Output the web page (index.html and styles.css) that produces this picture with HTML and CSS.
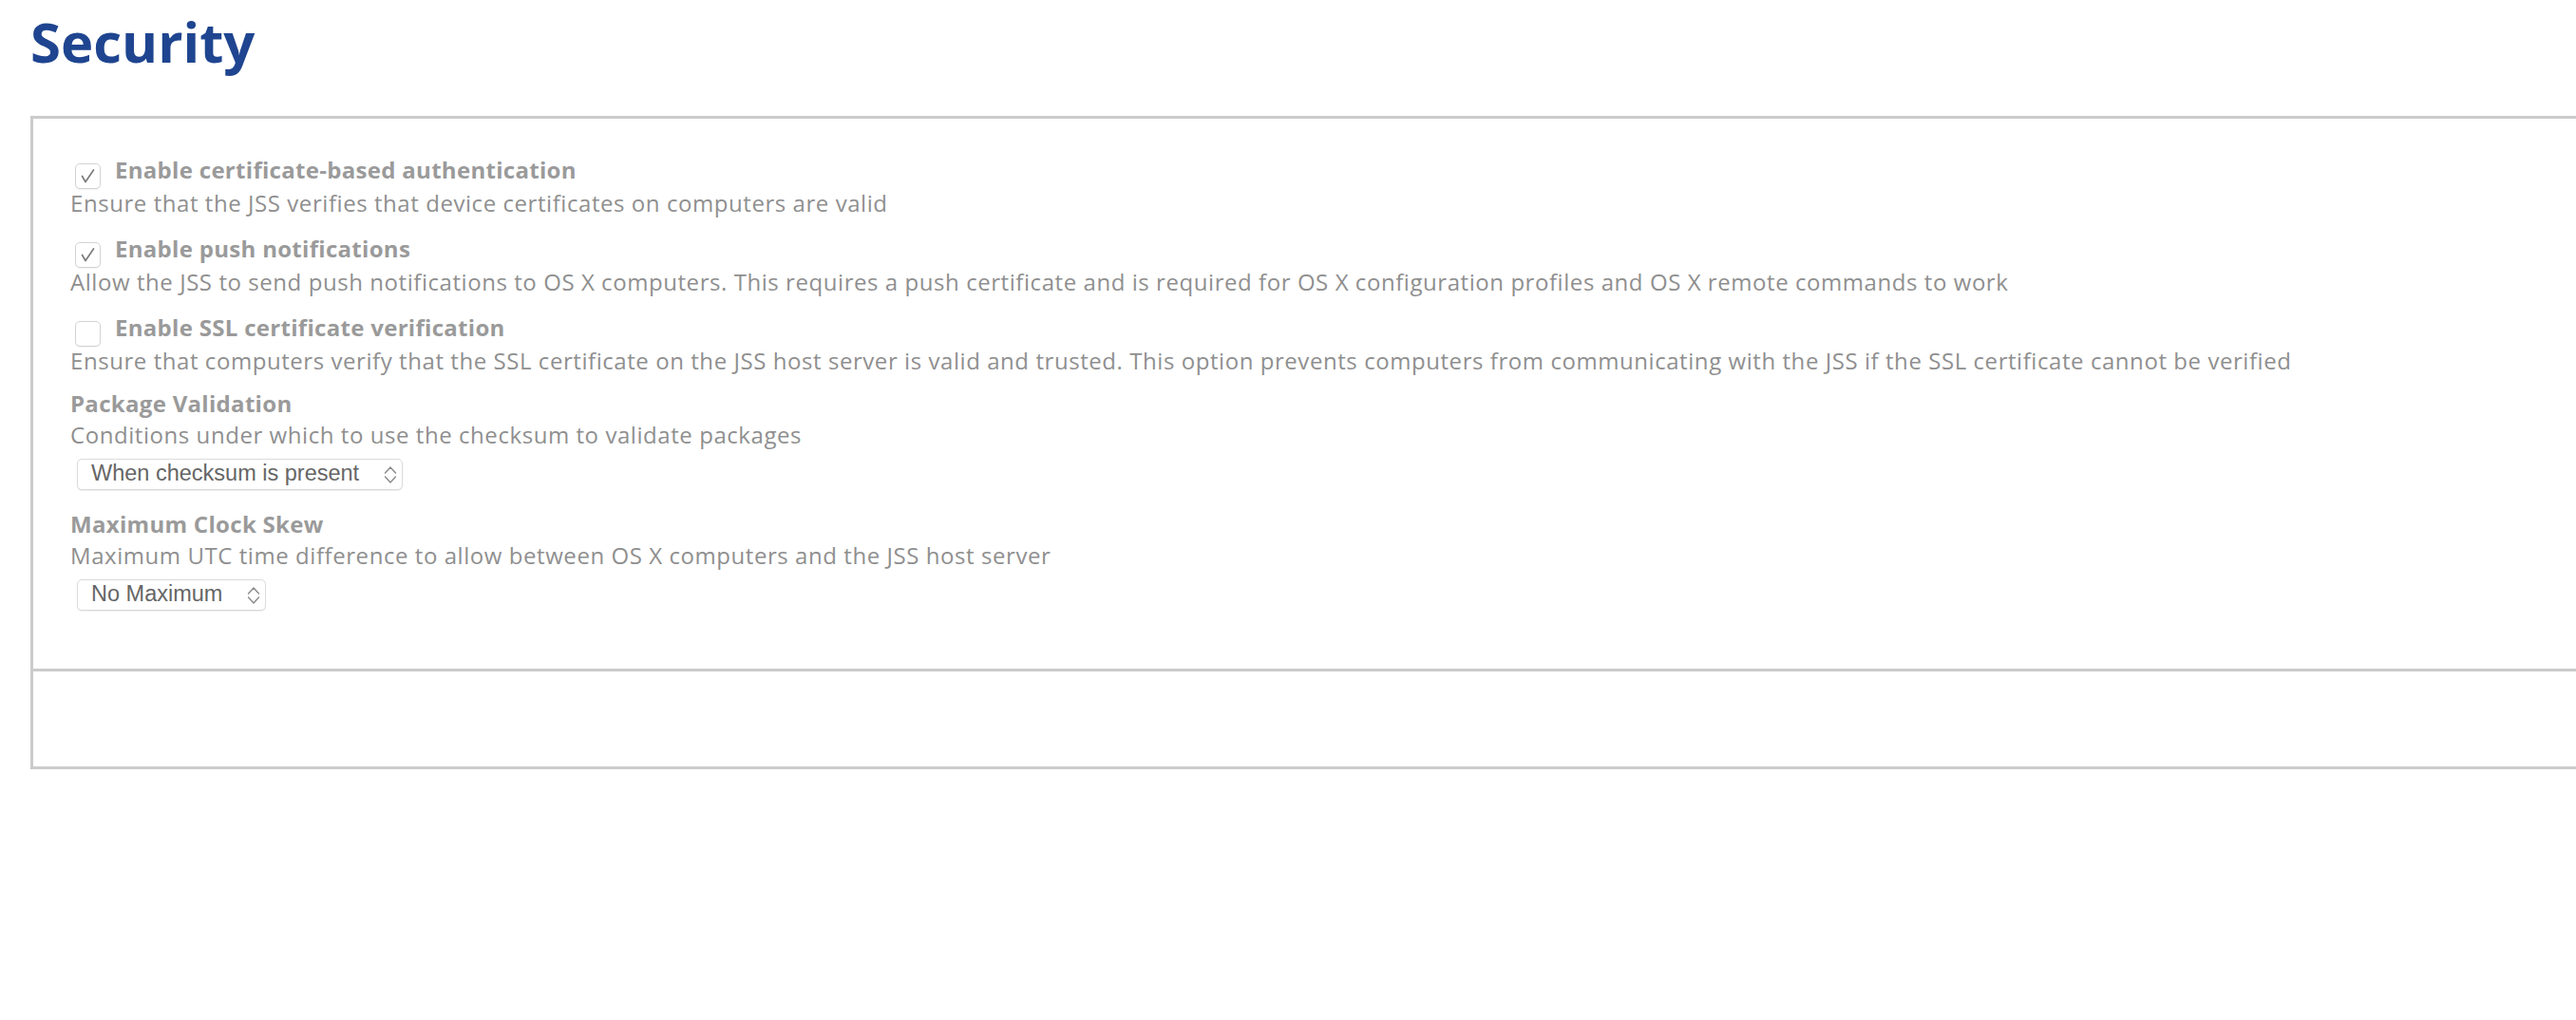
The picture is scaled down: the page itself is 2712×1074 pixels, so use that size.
FILE: index.html
```html
<!DOCTYPE html>
<html lang="en">
<head>
<meta charset="utf-8">
<title>Security</title>
<link rel="stylesheet" href="styles.css">
</head>
<body>
<div class="page">
  <h1 class="title">Security</h1>
  <div class="panel">
    <div class="panel-body">
      <div class="row">
        <div class="row-label">
          <span class="checkbox is-checked"><svg viewBox="0 0 27 27" width="27" height="27"><polyline points="7.5,13.5 11,19.5 19.5,7" fill="none" stroke="#7c7c7c" stroke-width="1.7" stroke-linecap="round" stroke-linejoin="round"/></svg></span>
          <span class="label">Enable certificate-based authentication</span>
        </div>
        <div class="desc">Ensure that the JSS verifies that device certificates on computers are valid</div>
      </div>
      <div class="row">
        <div class="row-label">
          <span class="checkbox is-checked"><svg viewBox="0 0 27 27" width="27" height="27"><polyline points="7.5,13.5 11,19.5 19.5,7" fill="none" stroke="#7c7c7c" stroke-width="1.7" stroke-linecap="round" stroke-linejoin="round"/></svg></span>
          <span class="label">Enable push notifications</span>
        </div>
        <div class="desc">Allow the JSS to send push notifications to OS X computers. This requires a push certificate and is required for OS X configuration profiles and OS X remote commands to work</div>
      </div>
      <div class="row">
        <div class="row-label">
          <span class="checkbox"></span>
          <span class="label">Enable SSL certificate verification</span>
        </div>
        <div class="desc">Ensure that computers verify that the SSL certificate on the JSS host server is valid and trusted. This option prevents computers from communicating with the JSS if the SSL certificate cannot be verified</div>
      </div>
      <div class="row field">
        <div class="field-label">Package Validation</div>
        <div class="desc">Conditions under which to use the checksum to validate packages</div>
        <div class="select">
          <span class="select-text">When checksum is present</span>
          <svg class="select-arrows" viewBox="0 0 14 20" width="14" height="20"><polyline points="1.5,8 7,2 12.5,8" fill="none" stroke="#8a8a8a" stroke-width="1.4" stroke-linecap="round" stroke-linejoin="round"/><polyline points="1.5,12 7,18 12.5,12" fill="none" stroke="#8a8a8a" stroke-width="1.4" stroke-linecap="round" stroke-linejoin="round"/></svg>
        </div>
      </div>
      <div class="row field">
        <div class="field-label">Maximum Clock Skew</div>
        <div class="desc">Maximum UTC time difference to allow between OS X computers and the JSS host server</div>
        <div class="select">
          <span class="select-text">No Maximum</span>
          <svg class="select-arrows" viewBox="0 0 14 20" width="14" height="20"><polyline points="1.5,8 7,2 12.5,8" fill="none" stroke="#8a8a8a" stroke-width="1.4" stroke-linecap="round" stroke-linejoin="round"/><polyline points="1.5,12 7,18 12.5,12" fill="none" stroke="#8a8a8a" stroke-width="1.4" stroke-linecap="round" stroke-linejoin="round"/></svg>
        </div>
      </div>
    </div>
    <div class="panel-footer"></div>
  </div>
</div>
</body>
</html>
```

FILE: styles.css
```css
html, body {
  margin: 0;
  padding: 0;
  background: #ffffff;
  overflow: hidden;
}

body {
  font-family: "Open Sans", "Noto Sans", sans-serif;
}

.page {
  padding: 0 0 0 32px;
}

.title {
  margin: 8px 0 42px 0;
  font-size: 58px;
  line-height: 72px;
  font-weight: 700;
  color: #1f4590;
  letter-spacing: 0;
}

.panel {
  border: 3px solid #cbcbcb;
  margin-right: -60px;
}

.panel-body {
  padding: 35px 0 53px 39px;
  display: flex;
  flex-direction: column;
  gap: 12px;
}

.panel-footer {
  border-top: 3px solid #cbcbcb;
  height: 100px;
}

.row {
  display: flex;
  flex-direction: column;
  align-items: flex-start;
}

.row-label {
  display: flex;
  align-items: flex-start;
  height: 37px;
}

.checkbox {
  box-sizing: border-box;
  width: 27px;
  height: 27px;
  margin: 12px 15px 0 5px;
  border: 1px solid #d3d3d3;
  border-radius: 5px;
  background: #fff;
  box-shadow: 0 1px 1px rgba(0, 0, 0, 0.05);
  display: flex;
  align-items: center;
  justify-content: center;
  flex: none;
}

.checkbox svg {
  display: block;
  margin: -1px;
}

.label,
.field-label {
  font-size: 24px;
  font-weight: 700;
  color: #9a9a9a;
  letter-spacing: 0.3px;
  line-height: 37px;
  white-space: nowrap;
}

.field-label {
  line-height: 32px;
}

.desc {
  font-size: 24px;
  font-weight: 400;
  color: #8f8f8f;
  letter-spacing: 0.56px;
  line-height: 34px;
  white-space: nowrap;
}

.select {
  box-sizing: border-box;
  display: inline-flex;
  align-items: center;
  gap: 26px;
  height: 33px;
  margin: 8px 0 8px 7px;
  padding: 0 5px 3px 14px;
  border: 1px solid #dadada;
  border-radius: 5px;
  background: #fff;
  box-shadow: 0 1px 1px rgba(0, 0, 0, 0.07);
}

.select-text {
  font-family: "Liberation Sans", Arial, sans-serif;
  font-size: 23.5px;
  line-height: 28px;
  color: #666666;
  white-space: nowrap;
}

.select-arrows {
  display: block;
  flex: none;
  margin-top: 3px;
}
```
